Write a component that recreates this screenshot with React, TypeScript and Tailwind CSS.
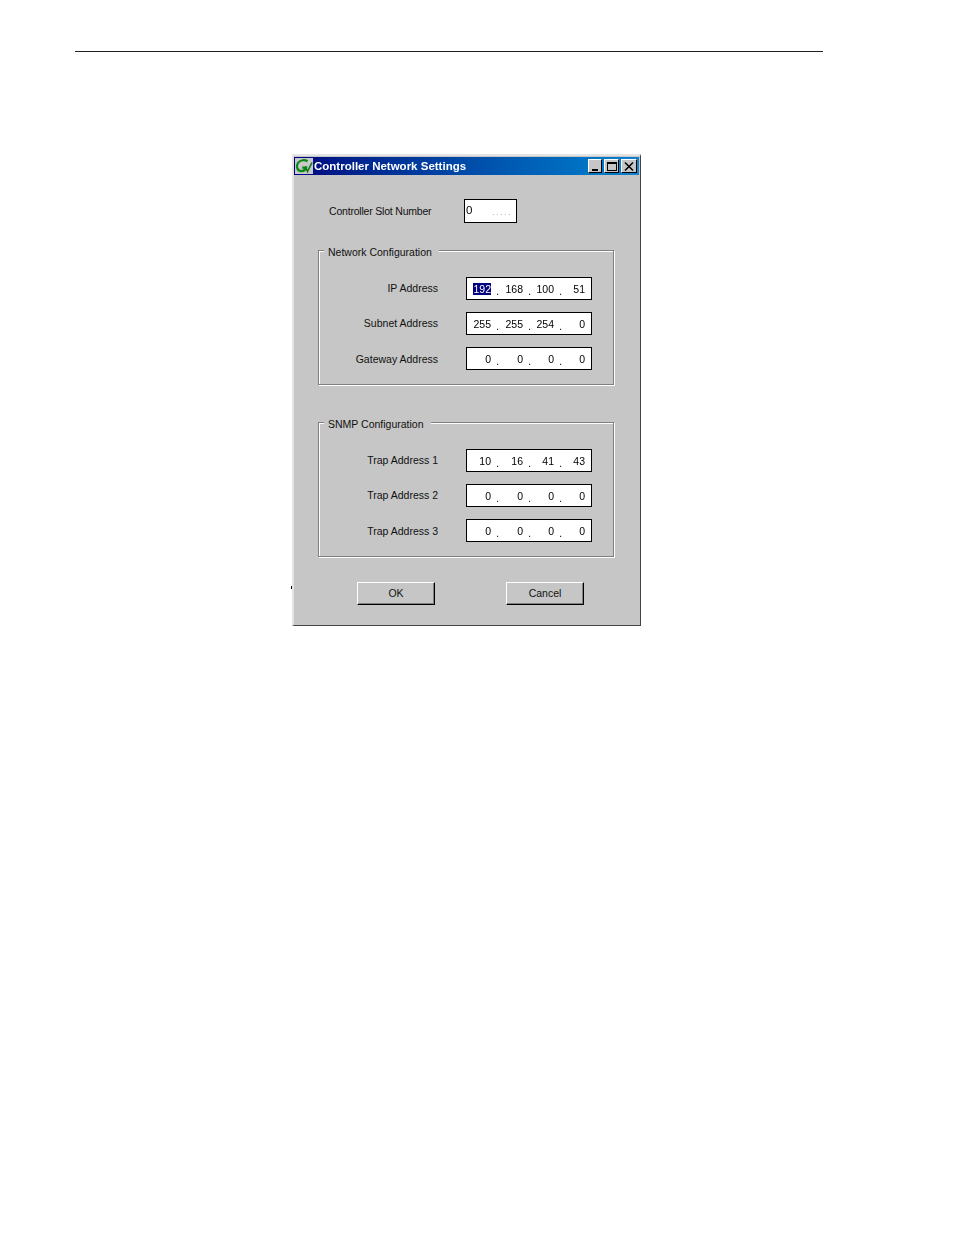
const FONT = "[font-family:'Liberation_Sans',Arial,sans-serif]";

type Row = { label: string; octets: string[]; low?: boolean };

const NETWORK_ROWS: Row[] = [
  { label: "IP Address", octets: ["192", "168", "100", "51"] },
  { label: "Subnet Address", octets: ["255", "255", "254", "0"] },
  { label: "Gateway Address", octets: ["0", "0", "0", "0"], low: true },
];

const SNMP_ROWS: Row[] = [
  { label: "Trap Address 1", octets: ["10", "16", "41", "43"] },
  { label: "Trap Address 2", octets: ["0", "0", "0", "0"] },
  { label: "Trap Address 3", octets: ["0", "0", "0", "0"], low: true },
];

function Logo() {
  return (
    <div className="w-[18px] h-[16px] bg-[#c8c8c8] flex items-center justify-center">
      <svg width="18" height="16" viewBox="0 0 18 16" fill="none">
        <path d="M12.5 3.4C10 1.4 5 1.8 2.8 5.2 0.8 8.8 2.4 13 6.5 13.2 9 13.3 10.3 12 11 9.6 L7.2 9.6" stroke="#0a8a12" strokeWidth="2.2" />
        <path d="M10.5 8.5 L12.5 13.5 L17 4.5" stroke="#0a7a12" strokeWidth="1.6" />
      </svg>
    </div>
  );
}

function WinButton({ children, className }: { children: React.ReactNode; className?: string }) {
  return (
    <div
      className={`h-[14px] bg-[#c6c6c6] border-t border-l border-t-white border-l-white border-r border-b border-r-black border-b-black flex items-center justify-center ${className ?? ""}`}
    >
      {children}
    </div>
  );
}

function IpField({ octets, selected }: { octets: string[]; selected?: boolean }) {
  return (
    <div className="w-[126px] h-[23px] bg-white border border-black pl-[3px] grid grid-cols-[21px_24px_23px_23px] items-center gap-x-[8px]">
      {octets.map((o, i) => (
        <div key={i} className="relative text-right text-[10.5px] leading-[14px] text-black [will-change:transform]">
          {selected && i === 0 ? <span className="bg-[#000080] text-white">{o}</span> : o}
          {i < 3 && <span className="absolute right-[-8px] top-[5px] text-[10px] leading-[10px]">.</span>}
        </div>
      ))}
    </div>
  );
}

function Group({ title, rows, selectFirst }: { title: string; rows: Row[]; selectFirst?: boolean }) {
  return (
    <div className="relative w-[296px] h-[135px] border border-[#808080] shadow-[inset_1px_1px_0_#fff,1px_1px_0_#fff] pt-[26px] pr-[21px] flex flex-col gap-[12px]">
      <div className="absolute left-[5px] top-[-5px] bg-[#c6c6c6] pl-[4px] pr-[7px] text-[10.5px] leading-[13px] text-[#111]">{title}</div>
      {rows.map((r, i) => (
        <div key={r.label} className="flex items-center justify-end gap-[28px]">
          <span className={`text-[10.5px] text-[#111] ${r.low ? "mt-[2px]" : ""}`}>{r.label}</span>
          <IpField octets={r.octets} selected={selectFirst && i === 0} />
        </div>
      ))}
    </div>
  );
}

function DlgButton({ label }: { label: string }) {
  return (
    <button className="w-[78px] h-[23px] bg-[#c6c6c6] border-t border-l border-t-white border-l-white border-r border-b border-r-black border-b-black shadow-[inset_-1px_-1px_0_#808080] text-[10.5px] text-[#111]">
      {label}
    </button>
  );
}

export default function App() {
  return (
    <div className={`${FONT} w-[954px] h-[1235px] bg-white pt-[51px] pl-[75px]`}>
      <div className="w-[748px] h-px bg-[#222]" />
      <div className="relative ml-[217px] mt-[102px] w-[349px] h-[472px] bg-[#c6c6c6] border-t-2 border-l-2 border-t-[#e4e4e4] border-l-[#e4e4e4] border-r border-b border-r-[#444] border-b-[#444] pt-px flex flex-col">
        <div className="absolute left-[-3px] top-[430px] w-px h-[3px] bg-black" />
        <div className="h-[18px] w-[345px] flex items-center bg-gradient-to-r from-[#000080] to-[#1084d0] pr-[2px]">
          <div className="ml-px">
            <Logo />
          </div>
          <span className="ml-px text-white font-bold text-[11.5px] leading-[18px] whitespace-nowrap [will-change:transform]">Controller Network Settings</span>
          <div className="ml-auto flex">
            <WinButton className="w-[14px]">
              <div className="w-[6px] h-[2px] bg-black mt-[7px] mr-[1px]" />
            </WinButton>
            <WinButton className="ml-[2px] w-[15px]">
              <div className="w-[10px] h-[9px] border border-black border-t-2" />
            </WinButton>
            <WinButton className="ml-[2px] w-[16px]">
              <svg width="10" height="9" viewBox="0 0 10 9">
                <path d="M1 0.5 L9 8.5 M9 0.5 L1 8.5" stroke="#000" strokeWidth="1.5" />
              </svg>
            </WinButton>
          </div>
        </div>

        <div className="flex items-center h-[24px] mt-[24px] pl-[35px]">
          <span className="w-[135px] text-[10.5px] tracking-[-0.2px] text-[#111] mt-[2px]">Controller Slot Number</span>
          <div className="w-[53px] h-[24px] bg-white border border-black pl-px flex items-center justify-between pr-[4px]">
            <span className="text-[11.5px] text-black [will-change:transform]">0</span>
            <span className="text-[9px] tracking-[1.5px] text-[#aaa] mt-[3px] [will-change:transform]">.....</span>
          </div>
        </div>

        <div className="ml-[24px] mt-[27px] flex flex-col gap-[37px]">
          <Group title="Network Configuration" rows={NETWORK_ROWS} selectFirst />
          <Group title="SNMP Configuration" rows={SNMP_ROWS} />
        </div>

        <div className="mt-[25px] pl-[63px] flex gap-[71px]">
          <DlgButton label="OK" />
          <DlgButton label="Cancel" />
        </div>
      </div>
    </div>
  );
}
